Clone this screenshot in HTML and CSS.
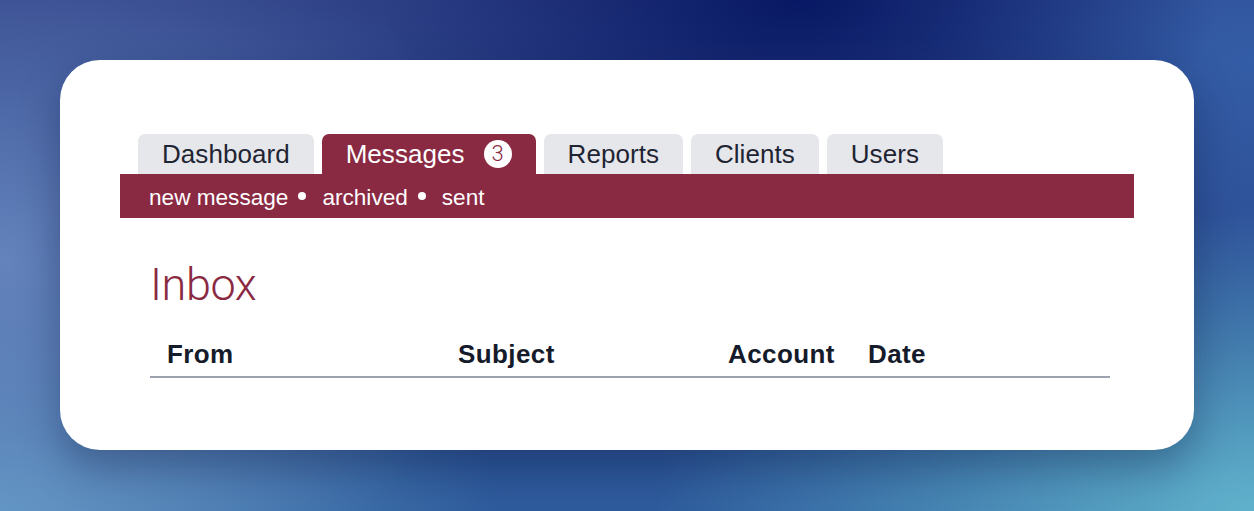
FILE: index.html
```html
<!DOCTYPE html>
<html lang="en">
<head>
<meta charset="utf-8">
<title>Inbox</title>
<link rel="stylesheet" href="styles.css">
</head>
<body>
<div class="card">
  <nav class="tabs">
    <a class="tab">Dashboard</a>
    <a class="tab active">Messages <span class="badge">3</span></a>
    <a class="tab">Reports</a>
    <a class="tab">Clients</a>
    <a class="tab">Users</a>
  </nav>
  <div class="subnav">
    <a class="sublink">new message</a><span class="dot"></span>
    <a class="sublink">archived</a><span class="dot"></span>
    <a class="sublink">sent</a>
  </div>
  <main class="content">
    <h1 class="title">Inbox</h1>
    <div class="table-head">
      <div class="col">From</div>
      <div class="col">Subject</div>
      <div class="col">Account</div>
      <div class="col">Date</div>
    </div>
  </main>
</div>
</body>
</html>
```
FILE: styles.css
```css
html, body {
  margin: 0;
  height: 511px;
  overflow: hidden;
}
body {
  font-family: "Liberation Sans", Arial, sans-serif;
  background:
    radial-gradient(ellipse 420px 200px at 800px 0px, rgba(6, 22, 98, 0.95), rgba(6, 22, 98, 0) 100%),
    radial-gradient(ellipse 500px 380px at 0px 260px, rgba(110, 140, 195, 0.85), rgba(110, 140, 195, 0) 100%),
    radial-gradient(ellipse 600px 300px at 1254px 511px, rgba(96, 178, 204, 1), rgba(96, 178, 204, 0) 100%),
    radial-gradient(ellipse 500px 260px at 0px 511px, rgba(100, 160, 200, 0.9), rgba(100, 160, 200, 0) 100%),
    radial-gradient(ellipse 500px 300px at 1254px 60px, rgba(52, 96, 170, 0.9), rgba(52, 96, 170, 0) 100%),
    linear-gradient(180deg, #2d3f85 0%, #2a4d92 60%, #2e5b9c 100%);
  padding-top: 60px;
  box-sizing: border-box;
}
.card {
  width: 1134px;
  height: 390px;
  margin: 0 0 0 60px;
  box-sizing: border-box;
  background: #fff;
  border-radius: 40px;
  padding: 74px 60px 0 60px;
  box-shadow: 0 18px 40px rgba(10, 20, 60, 0.35);
}
.tabs {
  display: flex;
  gap: 8px;
  padding-left: 18px;
}
.tab {
  display: flex;
  align-items: center;
  height: 40px;
  padding: 0 24px;
  font-size: 26px;
  letter-spacing: 0.05px;
  line-height: 40px;
  color: #1f2433;
  background: #e5e7eb;
  border-radius: 7px 7px 0 0;
}
.tab.active {
  background: #8a2942;
  color: #fff;
}
.badge {
  display: inline-flex;
  align-items: center;
  justify-content: center;
  width: 28px;
  height: 28px;
  margin-left: 19px;
  border-radius: 50%;
  background: #fff;
  color: #8a2942;
  font-family: Roboto, "Liberation Sans", sans-serif;
  font-weight: 300;
  font-size: 22px;
  line-height: 28px;
}
.subnav {
  display: flex;
  align-items: center;
  height: 44px;
  box-sizing: border-box;
  padding: 3px 0 0 29px;
  background: #8a2942;
  color: #fff;
  font-size: 22.6px;
}
.sublink {
  color: #fff;
}
.dot {
  width: 8px;
  height: 8px;
  border-radius: 50%;
  background: #fff;
  margin: -3px 16px 0 10px;
}
.content {
  padding: 0 0 0 30px;
}
.title {
  margin: 45px 0 0 0;
  font-family: Roboto, "Liberation Sans", sans-serif;
  font-weight: 300;
  font-size: 45px;
  line-height: 44px;
  color: #8a2942;
  letter-spacing: -0.4px;
}
.table-head {
  display: grid;
  grid-template-columns: 291px 270px 140px 1fr;
  width: 960px;
  margin-top: 31px;
  padding-bottom: 6px;
  border-bottom: 2px solid #9ca3af;
}
.col {
  padding-left: 17px;
  font-size: 26px;
  font-weight: 700;
  letter-spacing: 0.4px;
  line-height: 32px;
  color: #151b2b;
}
```
